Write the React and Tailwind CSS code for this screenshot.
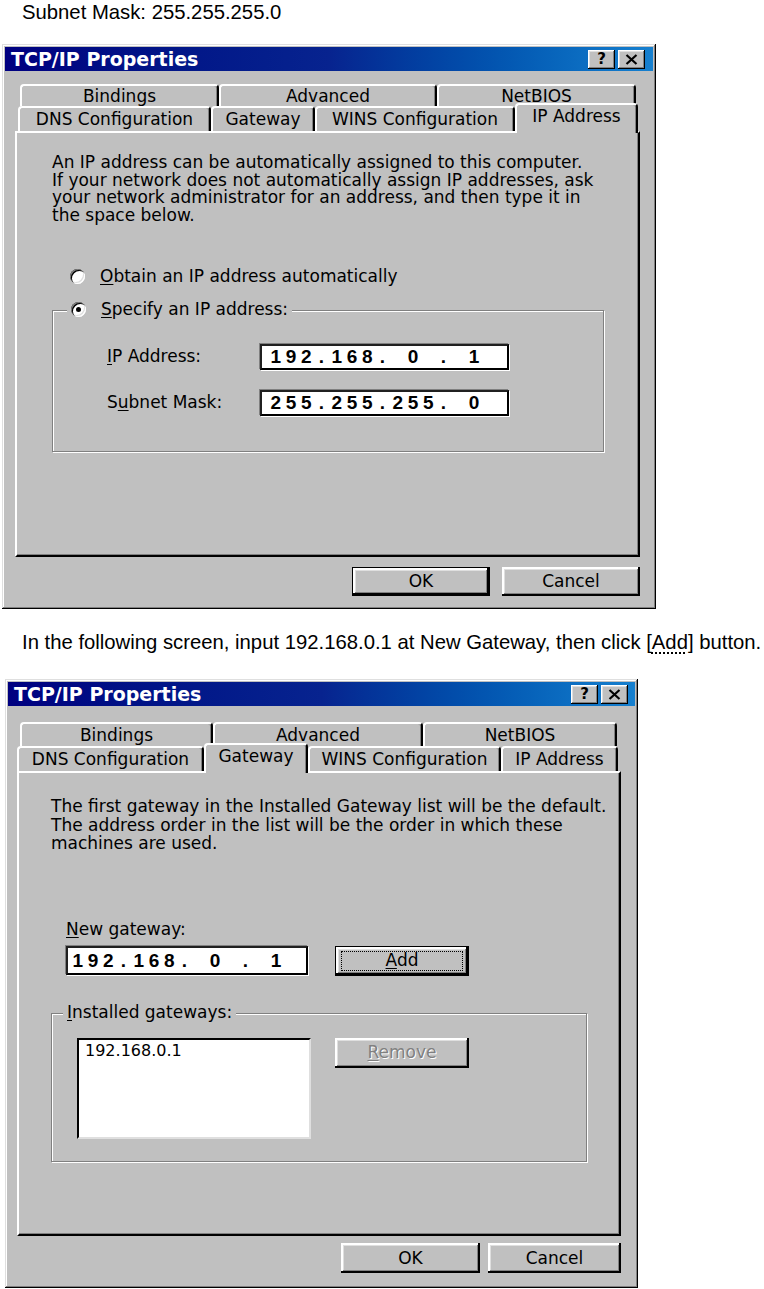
import React from "react";

const raised =
  "bg-[#c0c0c0] shadow-[inset_-2px_-2px_0_#000,inset_2px_2px_0_#fff,inset_-3px_-3px_0_#808080,inset_3px_3px_0_#dfdfdf]";
const defaultRaised =
  "bg-[#c0c0c0] shadow-[inset_0_0_0_1px_#000,inset_-3px_-3px_0_#000,inset_3px_3px_0_#fff,inset_-4px_-4px_0_#808080,inset_4px_4px_0_#dfdfdf]";

function TitleBtn({ children }) {
  return (
    <div className="w-[27px] h-[19px] flex items-center justify-center bg-[#c0c0c0] shadow-[inset_-1px_-1px_0_#000,inset_1px_1px_0_#fff,inset_-2px_-2px_0_#808080,inset_2px_2px_0_#dfdfdf]">
      {children}
    </div>
  );
}

function TitleBar({ pr }) {
  return (
    <div
      className={
        "h-[24px] flex items-center justify-between bg-linear-to-r from-[#000080] via-[#07238f] to-[#1680cf] pl-[6px] " +
        pr
      }
    >
      <span className="text-white font-bold text-[19px] leading-none font-['DejaVu_Sans',sans-serif]">
        TCP/IP Properties
      </span>
      <div className="flex gap-[3px]">
        <TitleBtn>
          <span className="font-bold text-[15px] leading-none text-black mt-[1px]">?</span>
        </TitleBtn>
        <TitleBtn>
          <svg width="13" height="11" viewBox="0 0 13 11">
            <path d="M1.5 1 L11.5 10 M11.5 1 L1.5 10" stroke="#000" strokeWidth="2.2" fill="none" />
          </svg>
        </TitleBtn>
      </div>
    </div>
  );
}

function Tab({ cls, children, selected }) {
  const base =
    "bg-[#c0c0c0] border-t-2 border-l-2 border-t-white border-l-white border-r-2 border-r-black rounded-t-[4px] shadow-[inset_-1px_0_0_#808080] flex justify-center text-[17px] leading-none whitespace-nowrap ";
  if (selected) {
    return (
      <div className={base + "relative z-10 h-[30px] -mb-[2px] items-start pt-[3px] " + cls}>
        {children}
      </div>
    );
  }
  return <div className={base + "items-center " + cls}>{children}</div>;
}

function Panel({ cls, children }) {
  return (
    <div
      className={
        "bg-[#c0c0c0] border-2 border-t-white border-l-white border-r-black border-b-black shadow-[inset_-1px_-1px_0_#808080] " +
        cls
      }
    >
      {children}
    </div>
  );
}

function Radio({ checked }) {
  return (
    <span className="relative inline-block w-[15px] h-[15px] shrink-0 rounded-full bg-white shadow-[inset_1px_1px_0_#808080,inset_2px_2px_0_#000,inset_-1px_-1px_0_#fff,inset_-2px_-2px_0_#dfdfdf]">
      {checked && (
        <span className="absolute left-[5px] top-[5px] w-[5px] h-[5px] rounded-full bg-black" />
      )}
    </span>
  );
}

function IpPart({ digits }) {
  return (
    <span className="flex justify-center w-[46px]">
      {digits.split("").map((c, i) => (
        <span key={i} className="inline-block w-[15.3px] text-center">
          {c}
        </span>
      ))}
    </span>
  );
}

function IpField({ parts, cls }) {
  return (
    <div
      className={
        "bg-white border-2 border-t-[#202020] border-l-[#202020] border-r-black border-b-black shadow-[1px_1px_0_#fff,-1px_-1px_0_#808080] flex items-center font-bold text-[19px] leading-none font-['Liberation_Sans',Arial,sans-serif] " +
        cls
      }
    >
      {parts.map((p, i) => (
        <React.Fragment key={i}>
          {i > 0 && <span className="inline-block w-[15px] text-center">.</span>}
          <IpPart digits={p} />
        </React.Fragment>
      ))}
    </div>
  );
}

function Btn({ cls, children, isDefault, focused }) {
  return (
    <div
      className={
        (isDefault ? defaultRaised : raised) +
        " relative flex items-center justify-center text-[17px] leading-none " +
        cls
      }
    >
      {focused && (
        <span className="absolute left-[6px] right-[6px] top-[5px] bottom-[5px] border border-dotted border-black" />
      )}
      {children}
    </div>
  );
}

const dialogFrame =
  "bg-[#c0c0c0] p-[3px] flex flex-col shadow-[inset_-1px_-1px_0_#000,inset_1px_1px_0_#dfdfdf,inset_-2px_-2px_0_#808080,inset_2px_2px_0_#fff]";

function DialogIP() {
  return (
    <div className={dialogFrame + " mt-[20px] ml-[2px] w-[654px] h-[565px]"}>
      <TitleBar pr="pr-[8px]" />
      <div className="flex flex-col pl-[10px] pr-[13px]">
        <div className="flex flex-col mt-[13px]">
          <div className="flex h-[22px] pl-[5px]">
            <Tab cls="w-[199px]">Bindings</Tab>
            <Tab cls="w-[218px]">Advanced</Tab>
            <Tab cls="w-[199px]">NetBIOS</Tab>
          </div>
          <div className="flex items-end h-[25px] pl-[3px]">
            <Tab cls="w-[193px] h-[25px]">DNS Configuration</Tab>
            <Tab cls="w-[104px] h-[25px]">Gateway</Tab>
            <Tab cls="w-[200px] h-[25px]">WINS Configuration</Tab>
            <Tab cls="w-[123px]" selected>
              IP Address
            </Tab>
          </div>
        </div>
        <Panel cls="h-[426px] pl-[35px] pt-[21px]">
          <div className="text-[17px] leading-[17.7px] whitespace-nowrap">
            <div>An IP address can be automatically assigned to this computer.</div>
            <div>If your network does not automatically assign IP addresses, ask</div>
            <div>your network administrator for an address, and then type it in</div>
            <div>the space below.</div>
          </div>
          <div className="mt-[43px] ml-[18px] flex items-center h-[18px] gap-[15px] text-[17px] leading-none">
            <Radio />
            <span>
              <u className="underline-offset-2">O</u>btain an IP address automatically
            </span>
          </div>
          <div className="relative mt-[24px] w-[552px] h-[142px] border border-[#808080] shadow-[inset_1px_1px_0_#fff,1px_1px_0_#fff]">
            <div className="absolute left-[14px] -top-[10px] bg-[#c0c0c0] px-[4px] flex items-center gap-[15px] h-[18px] text-[17px] leading-none">
              <Radio checked />
              <span>
                <u className="underline-offset-2">S</u>pecify an IP address:
              </span>
            </div>
            <div className="pt-[33px] pl-[54px] flex flex-col gap-[20px] text-[17px] leading-none">
              <div className="flex items-center">
                <span className="w-[153px]">
                  <u className="underline-offset-2">I</u>P Address:
                </span>
                <IpField parts={["192", "168", "0", "1"]} cls="w-[249px] h-[26px] pl-[6px]" />
              </div>
              <div className="flex items-center">
                <span className="w-[153px]">
                  S<u className="underline-offset-2">u</u>bnet Mask:
                </span>
                <IpField parts={["255", "255", "255", "0"]} cls="w-[249px] h-[26px] pl-[6px]" />
              </div>
            </div>
          </div>
        </Panel>
        <div className="flex justify-end gap-[12px] mt-[10px]">
          <Btn cls="w-[138px] h-[29px]" isDefault>
            OK
          </Btn>
          <Btn cls="w-[138px] h-[29px]">Cancel</Btn>
        </div>
      </div>
    </div>
  );
}

function DialogGateway() {
  return (
    <div className={dialogFrame + " mt-[25px] ml-[5px] w-[633px] h-[609px]"}>
      <TitleBar pr="pr-[7px]" />
      <div className="flex flex-col pl-[9px] pr-[14px]">
        <div className="flex flex-col mt-[16px]">
          <div className="flex h-[24px] pl-[3px]">
            <Tab cls="w-[193px]">Bindings</Tab>
            <Tab cls="w-[210px]">Advanced</Tab>
            <Tab cls="w-[194px]">NetBIOS</Tab>
          </div>
          <div className="flex items-end h-[25px]">
            <Tab cls="w-[187px] h-[25px]">DNS Configuration</Tab>
            <Tab cls="w-[104px]" selected>
              Gateway
            </Tab>
            <Tab cls="w-[193px] h-[25px]">WINS Configuration</Tab>
            <Tab cls="w-[117px] h-[25px]">IP Address</Tab>
          </div>
        </div>
        <Panel cls="h-[465px] pl-[32px] pt-[24px]">
          <div className="text-[17px] leading-[18.5px] whitespace-nowrap">
            <div>The first gateway in the Installed Gateway list will be the default.</div>
            <div>The address order in the list will be the order in which these</div>
            <div>machines are used.</div>
          </div>
          <div className="mt-[68px] ml-[15px] h-[18px] flex items-center text-[17px] leading-none">
            <span>
              <u className="underline-offset-2">N</u>ew gateway:
            </span>
          </div>
          <div className="mt-[7px] ml-[15px] flex items-center gap-[27px]">
            <IpField parts={["192", "168", "0", "1"]} cls="w-[242px] h-[29px] pl-[2px]" />
            <Btn cls="w-[134px] h-[30px]" isDefault focused>
              <span>
                <u className="underline-offset-2">A</u>dd
              </span>
            </Btn>
          </div>
          <div className="relative mt-[37px] w-[536px] h-[149px] border border-[#808080] shadow-[inset_1px_1px_0_#fff,1px_1px_0_#fff]">
            <div className="absolute left-[11px] -top-[10px] bg-[#c0c0c0] px-[4px] h-[18px] flex items-center text-[17px] leading-none">
              <span>
                <u className="underline-offset-2">I</u>nstalled gateways:
              </span>
            </div>
            <div className="pt-[24px] pl-[25px] flex items-start gap-[24px]">
              <div className="w-[234px] h-[101px] bg-white border-2 border-t-black border-l-black border-r-[#dfdfdf] border-b-[#dfdfdf] pl-[6px] pt-[2px] text-[16px] leading-[18px]">
                192.168.0.1
              </div>
              <Btn cls="w-[134px] h-[30px]">
                <span className="text-[#808080] [text-shadow:1px_1px_0_#fff]">
                  <u className="underline-offset-2">R</u>emove
                </span>
              </Btn>
            </div>
          </div>
        </Panel>
        <div className="flex justify-end gap-[8px] mt-[7px]">
          <Btn cls="w-[139px] h-[30px]">OK</Btn>
          <Btn cls="w-[133px] h-[30px]">Cancel</Btn>
        </div>
      </div>
    </div>
  );
}

export default function App() {
  return (
    <div className="w-[764px] h-[1289px] bg-white overflow-hidden font-['DejaVu_Sans',sans-serif] text-black">
      <div className="pl-[22px] pt-[1px] h-[24px] text-[20.3px] leading-[23px] whitespace-nowrap font-['Liberation_Sans',Arial,sans-serif]">
        Subnet Mask: 255.255.255.0
      </div>
      <DialogIP />
      <div className="mt-[22px] pl-[22px] h-[23px] text-[20.3px] leading-[23px] whitespace-nowrap font-['Liberation_Sans',Arial,sans-serif]">
        In the following screen, input 192.168.0.1 at New Gateway, then click [
        <span className="underline decoration-dotted decoration-[1.5px] underline-offset-[3px]">Add</span>] button.
      </div>
      <DialogGateway />
    </div>
  );
}
